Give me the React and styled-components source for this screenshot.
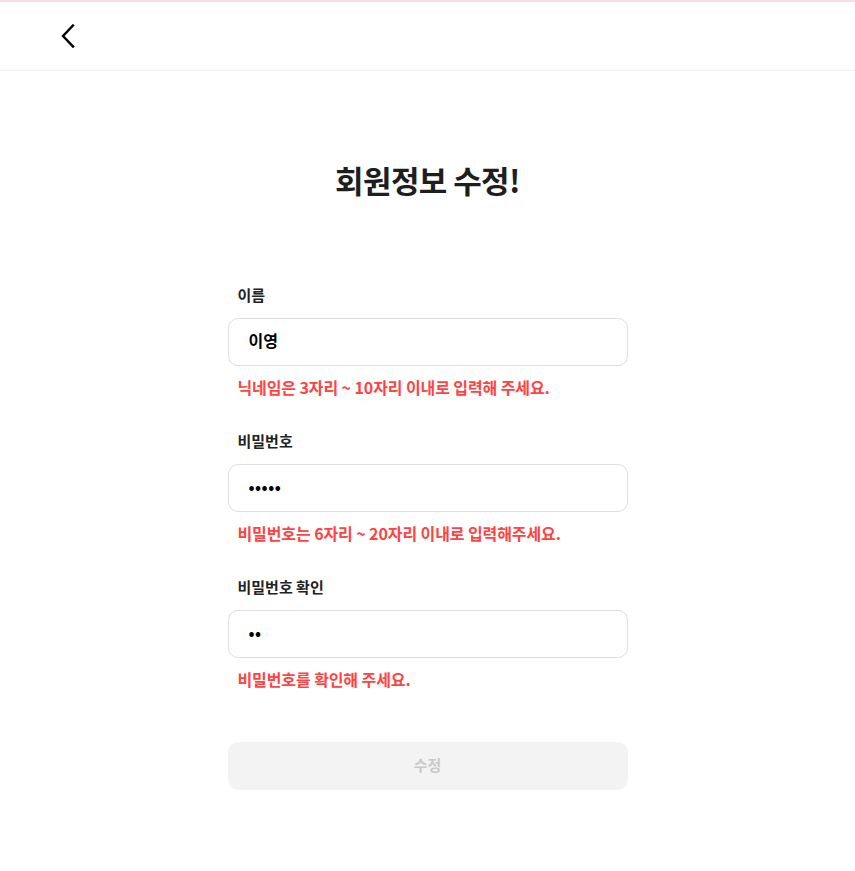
import React, { useState } from "react";
import styled, { createGlobalStyle } from "styled-components";

const GlobalStyle = createGlobalStyle`
  * { box-sizing: border-box; }
  body {
    margin: 0;
    background: #ffffff;
    font-family: "Noto Sans CJK KR", "Noto Sans", sans-serif;
    color: #222222;
  }
`;

const Page = styled.div`
  min-height: 100vh;
  border-top: 2px solid #f8dde2;
`;

const Header = styled.header`
  height: 69px;
  display: flex;
  align-items: center;
  padding-left: 56px;
  border-bottom: 1px solid #efefef;
`;

const BackButton = styled.button`
  display: flex;
  align-items: center;
  justify-content: center;
  width: 24px;
  height: 28px;
  padding: 0;
  border: none;
  background: none;
  cursor: pointer;
`;

const Main = styled.main`
  display: flex;
  flex-direction: column;
  align-items: center;
  padding-top: 89px;
`;

const Title = styled.h1`
  margin: 0 0 85px;
  font-size: 31px;
  line-height: 40px;
  font-weight: 700;
  letter-spacing: -0.6px;
  color: #1e1e1e;
`;

const Form = styled.form`
  width: 400px;
  display: flex;
  flex-direction: column;
`;

const Field = styled.div`
  display: flex;
  flex-direction: column;
  margin-bottom: 34px;
`;

const Label = styled.label`
  padding-left: 10px;
  margin-bottom: 13px;
  font-size: 15px;
  line-height: 20px;
  font-weight: 700;
  color: #222222;
`;

const Input = styled.input`
  height: 48px;
  padding: 0 20px 4px;
  border: 1px solid #dedede;
  border-radius: 10px;
  outline: none;
  font-family: inherit;
  font-size: 16px;
  font-weight: 700;
  color: #000000;
  letter-spacing: ${({ type }) => (type === "password" ? "0.5px" : "0")};
`;

const Error = styled.p`
  margin: 11px 0 0;
  padding-left: 10px;
  font-size: 16px;
  line-height: 20px;
  font-weight: 700;
  letter-spacing: -0.1px;
  color: #ff4343;
`;

const Submit = styled.button`
  margin-top: 19px;
  height: 48px;
  padding-bottom: 4px;
  border: none;
  border-radius: 10px;
  background: #f3f3f3;
  font-family: inherit;
  font-size: 15px;
  font-weight: 700;
  color: #c9c9c9;
  cursor: default;
`;

const fields = [
  {
    id: "name",
    label: "이름",
    type: "text",
    value: "이영",
    error: "닉네임은 3자리 ~ 10자리 이내로 입력해 주세요.",
  },
  {
    id: "password",
    label: "비밀번호",
    type: "password",
    value: "12345",
    error: "비밀번호는 6자리 ~ 20자리 이내로 입력해주세요.",
  },
  {
    id: "passwordCheck",
    label: "비밀번호 확인",
    type: "password",
    value: "12",
    error: "비밀번호를 확인해 주세요.",
  },
];

const App = () => {
  const [values, setValues] = useState(
    Object.fromEntries(fields.map((f) => [f.id, f.value]))
  );

  const handleChange = (e) => {
    setValues({ ...values, [e.target.name]: e.target.value });
  };

  return (
    <Page>
      <GlobalStyle />
      <Header>
        <BackButton type="button" aria-label="뒤로가기">
          <svg width="16" height="24" viewBox="0 0 16 24" fill="none">
            <path
              d="M13 1.5L3 12L13 22.5"
              stroke="#000"
              strokeWidth="2.4"
              strokeLinecap="square"
            />
          </svg>
        </BackButton>
      </Header>
      <Main>
        <Title>회원정보 수정!</Title>
        <Form onSubmit={(e) => e.preventDefault()}>
          {fields.map((f) => (
            <Field key={f.id}>
              <Label htmlFor={f.id}>{f.label}</Label>
              <Input
                id={f.id}
                name={f.id}
                type={f.type}
                value={values[f.id]}
                onChange={handleChange}
              />
              <Error>{f.error}</Error>
            </Field>
          ))}
          <Submit type="submit" disabled>
            수정
          </Submit>
        </Form>
      </Main>
    </Page>
  );
};

export default App;
